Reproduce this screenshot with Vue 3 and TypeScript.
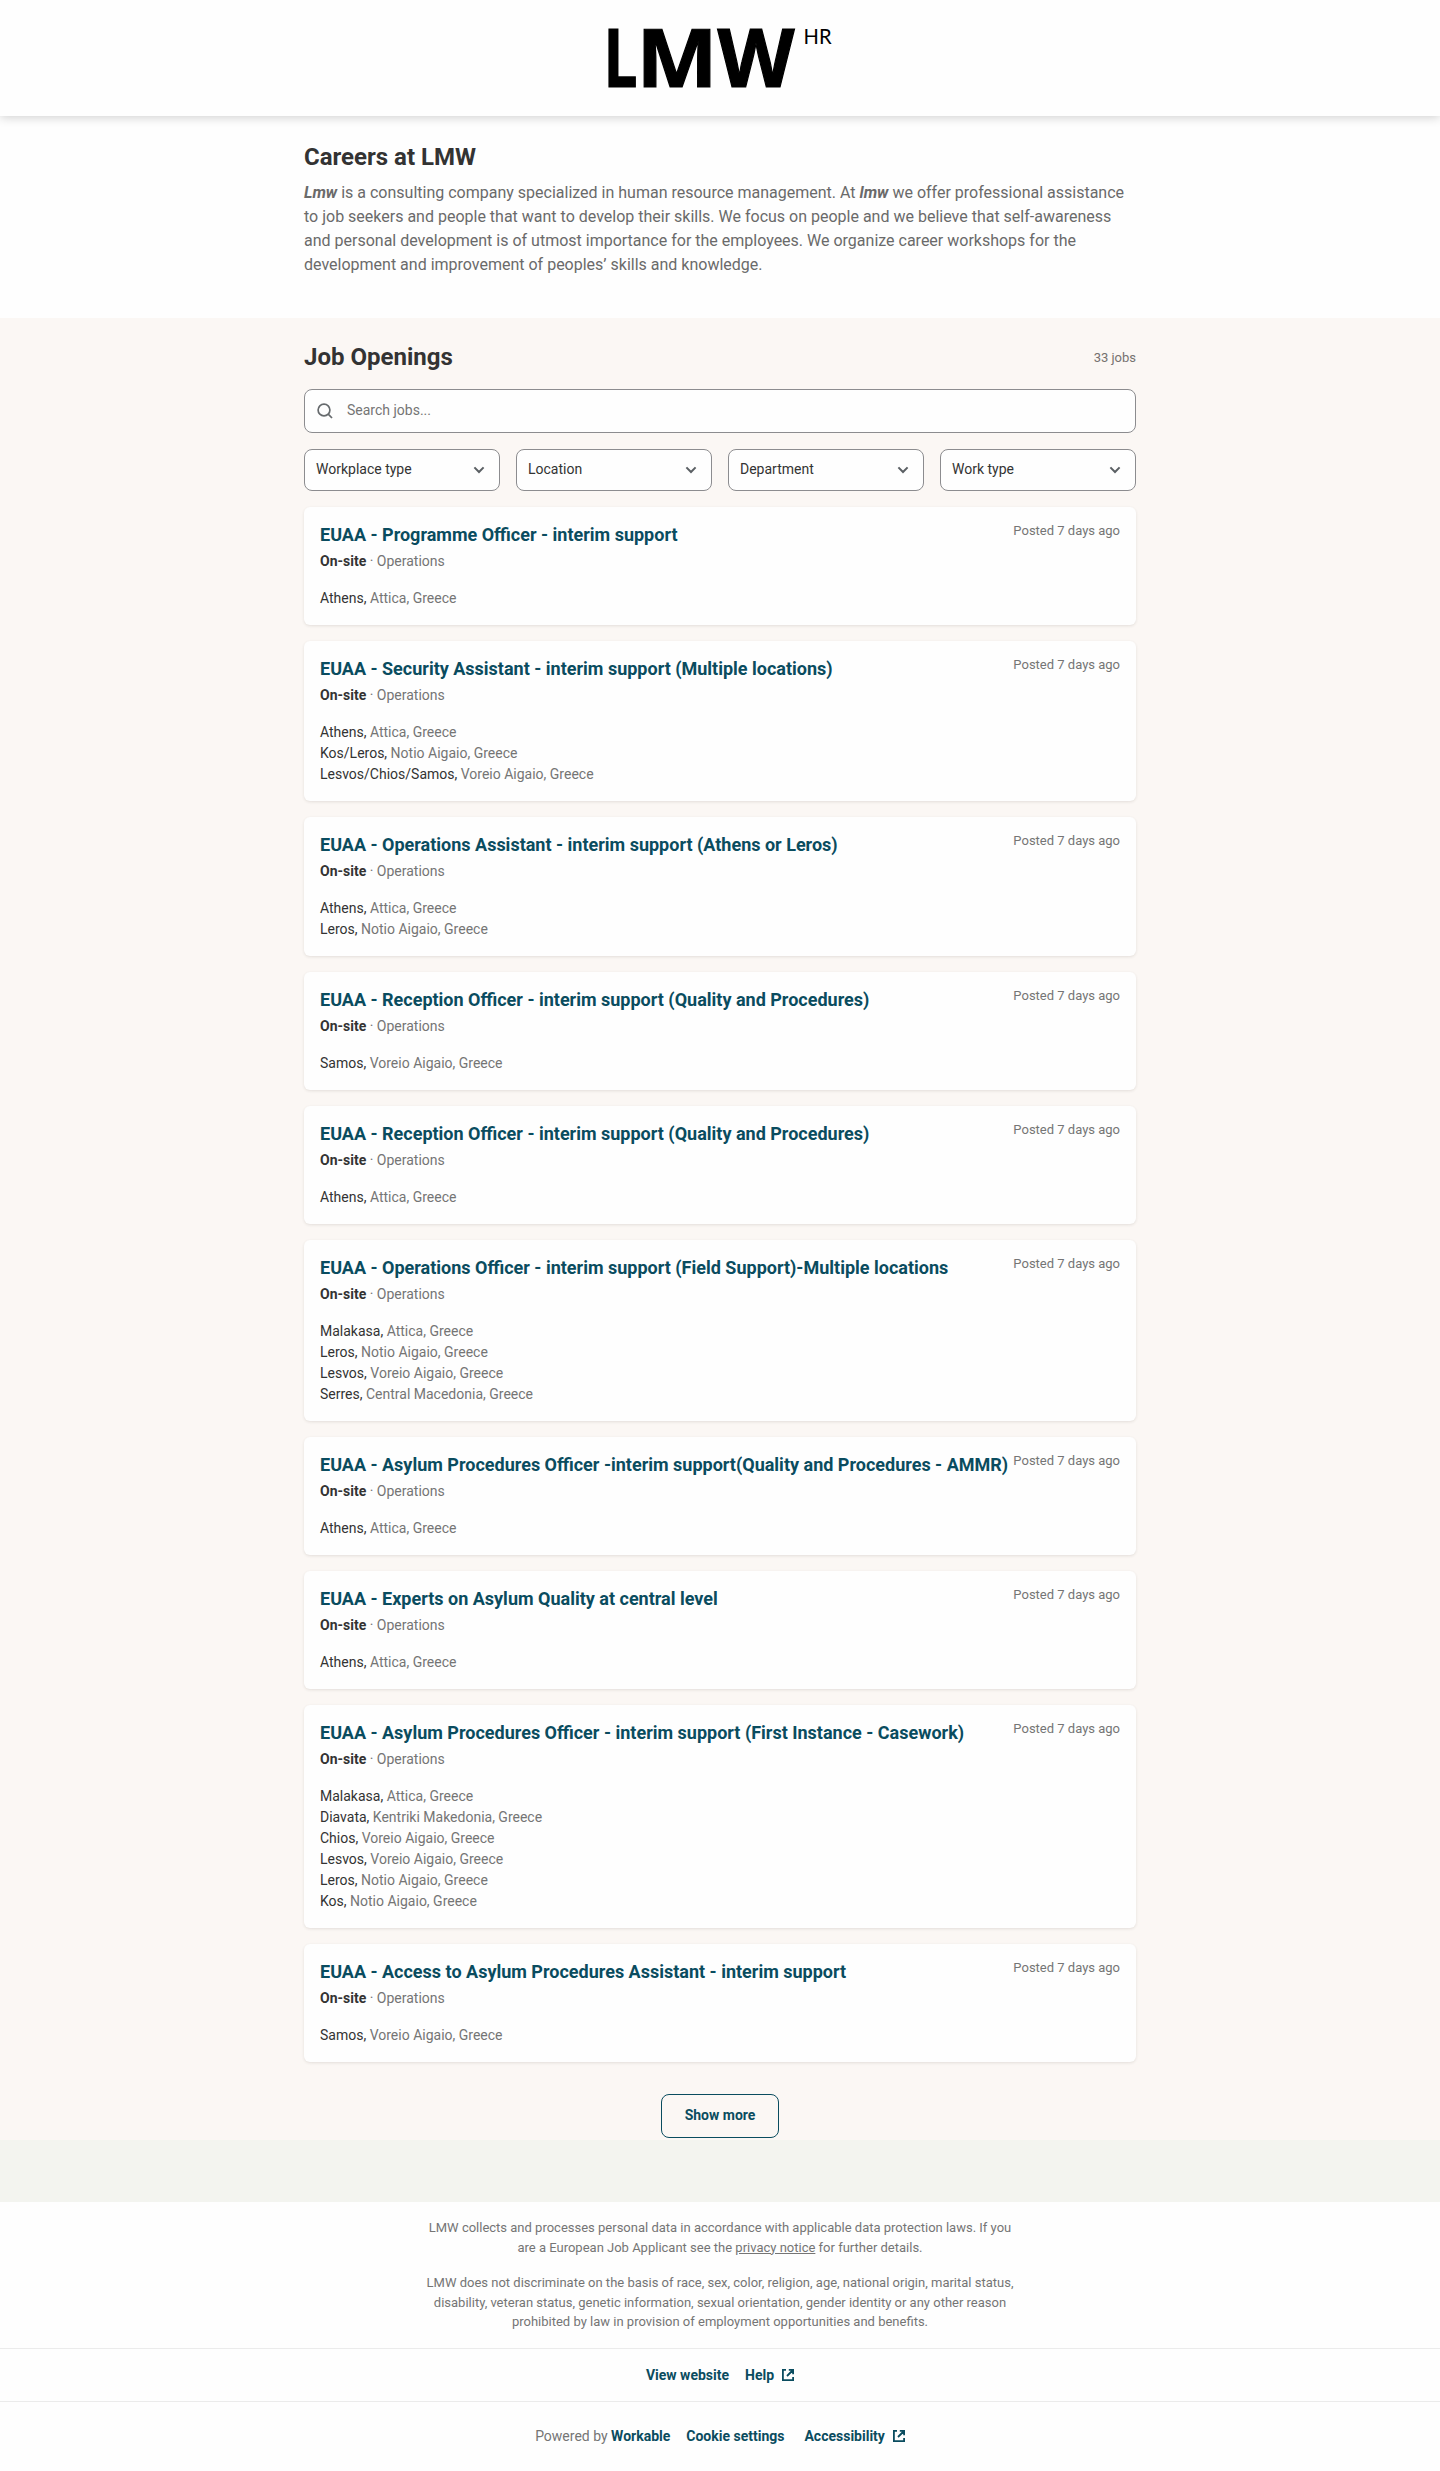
<script setup lang="ts">
interface Place {
  city: string
  region: string
}
interface Job {
  title: string
  places: Place[]
}

const athens: Place = { city: 'Athens', region: 'Attica' }
const malakasa: Place = { city: 'Malakasa', region: 'Attica' }
const samos: Place = { city: 'Samos', region: 'Voreio Aigaio' }
const leros: Place = { city: 'Leros', region: 'Notio Aigaio' }
const lesvos: Place = { city: 'Lesvos', region: 'Voreio Aigaio' }

const filters: string[] = ['Workplace type', 'Location', 'Department', 'Work type']

const jobs: Job[] = [
  { title: 'EUAA - Programme Officer - interim support', places: [athens] },
  {
    title: 'EUAA - Security Assistant - interim support (Multiple locations)',
    places: [
      athens,
      { city: 'Kos/Leros', region: 'Notio Aigaio' },
      { city: 'Lesvos/Chios/Samos', region: 'Voreio Aigaio' },
    ],
  },
  { title: 'EUAA - Operations Assistant - interim support (Athens or Leros)', places: [athens, leros] },
  { title: 'EUAA - Reception Officer - interim support (Quality and Procedures)', places: [samos] },
  { title: 'EUAA - Reception Officer - interim support (Quality and Procedures)', places: [athens] },
  {
    title: 'EUAA - Operations Officer - interim support (Field Support)-Multiple locations',
    places: [malakasa, leros, lesvos, { city: 'Serres', region: 'Central Macedonia' }],
  },
  { title: 'EUAA - Asylum Procedures Officer -interim support(Quality and Procedures - AMMR)', places: [athens] },
  { title: 'EUAA - Experts on Asylum Quality at central level', places: [athens] },
  {
    title: 'EUAA - Asylum Procedures Officer - interim support (First Instance - Casework)',
    places: [
      malakasa,
      { city: 'Diavata', region: 'Kentriki Makedonia' },
      { city: 'Chios', region: 'Voreio Aigaio' },
      lesvos,
      leros,
      { city: 'Kos', region: 'Notio Aigaio' },
    ],
  },
  { title: 'EUAA - Access to Asylum Procedures Assistant - interim support', places: [samos] },
]
</script>

<template>
  <div class="page">
    <header class="header">
      <svg class="logo" width="240" height="80" viewBox="0 0 240 80" role="img" aria-label="LMW HR">
        <g class="logo-main">
          <text x="3.500" y="68.500" textLength="34" lengthAdjust="spacingAndGlyphs">L</text>
          <text x="36.500" y="68.500" textLength="81" lengthAdjust="spacingAndGlyphs">M</text>
          <text x="117.500" y="68.500" textLength="77" lengthAdjust="spacingAndGlyphs">W</text>
        </g>
        <text class="logo-sub" x="203.500" y="25.500" textLength="28" lengthAdjust="spacingAndGlyphs">HR</text>
      </svg>
    </header>

    <section class="about">
      <div class="wrap">
        <h2 class="heading">Careers at LMW</h2>
        <p class="intro">
          <strong><em>Lmw</em></strong> is a consulting company specialized in human resource management. At
          <strong><em>lmw</em></strong> we offer professional assistance to job seekers and people that want to develop
          their skills. We focus on people and we believe that self-awareness and personal development is of utmost
          importance for the employees. We organize career workshops for the development and improvement of peoples’
          skills and knowledge.
        </p>
      </div>
    </section>

    <main class="openings">
      <div class="wrap">
        <div class="openings-head">
          <h2 class="heading">Job Openings</h2>
          <span class="count">33 jobs</span>
        </div>
        <div class="search">
          <svg width="16" height="16" viewBox="0 0 16 16" fill="none" stroke="#666a6d" stroke-width="1.700">
            <circle cx="7" cy="7" r="5.900" />
            <path d="M11.200 11.200 15 15" />
          </svg>
          <span>Search jobs...</span>
        </div>
        <div class="filters">
          <div v-for="f in filters" :key="f" class="filter">
            <span>{{ f }}</span>
            <svg width="12" height="8" viewBox="0 0 12 8" fill="none" stroke="#5a5f63" stroke-width="2">
              <path d="M1.400 1.400 6 6 10.600 1.400" />
            </svg>
          </div>
        </div>
        <ul class="jobs">
          <li v-for="(job, i) in jobs" :key="i" class="job">
            <div class="job-top">
              <h3 class="title">{{ job.title }}</h3>
              <small class="posted">Posted 7 days ago</small>
            </div>
            <div class="meta"><strong>On-site</strong> · Operations</div>
            <div class="places">
              <div v-for="p in job.places" :key="p.city" class="place">
                <span class="city">{{ p.city }},</span> {{ p.region }}, Greece
              </div>
            </div>
          </li>
        </ul>
        <button class="more" type="button">Show more</button>
      </div>
    </main>

    <footer class="footer">
      <div class="legal">
        <p>
          LMW collects and processes personal data in accordance with applicable data protection laws. If you<br />
          are a European Job Applicant see the <a class="notice">privacy notice</a> for further details.
        </p>
        <p>
          LMW does not discriminate on the basis of race, sex, color, religion, age, national origin, marital status,<br />
          disability, veteran status, genetic information, sexual orientation, gender identity or any other reason<br />
          prohibited by law in provision of employment opportunities and benefits.
        </p>
      </div>
      <nav class="links">
        <a>View website</a>
        <a class="external">
          Help
          <svg width="12" height="12" viewBox="0 0 12 12" fill="none" stroke="currentColor" stroke-width="1.800">
            <path d="M4 .9H.9v10.200h10.200V8M6.800.9h4.300v4.300M11 1 5 7" />
          </svg>
        </a>
      </nav>
      <div class="powered">
        <span class="by">Powered by <a>Workable</a></span>
        <a class="cookies">Cookie settings</a>
        <a class="external">
          Accessibility
          <svg width="12" height="12" viewBox="0 0 12 12" fill="none" stroke="currentColor" stroke-width="1.800">
            <path d="M4 .9H.9v10.200h10.200V8M6.800.9h4.300v4.300M11 1 5 7" />
          </svg>
        </a>
      </div>
    </footer>
  </div>
</template>

<style>
body {
  margin: 0;
  background: #f3f4ef;
}
</style>

<style scoped>
.page {
  font-family: Roboto, 'Liberation Sans', sans-serif;
  font-size: 14px;
  color: #333;
}
.page * {
  box-sizing: border-box;
}
.wrap {
  width: 832px;
  margin: 0 auto;
}
.header {
  position: relative;
  display: flex;
  justify-content: center;
  height: 116px;
  padding-top: 18px;
  background: #fefefe;
  box-shadow: 0 1px 10px rgba(0, 0, 0, 0.2);
}
.logo {
  display: block;
  overflow: visible;
}
.logo-main {
  font: 700 80.500px 'Open Sans', sans-serif;
  fill: #000;
  stroke: #000;
  stroke-width: 1.200px;
}
.logo-sub {
  font: 400 20.500px Lato, sans-serif;
  fill: #000;
}
.about {
  height: 202px;
  padding-top: 25px;
  background: #fefefe;
}
.heading {
  margin: 0;
  font-size: 24px;
  line-height: 32px;
  font-weight: 700;
  color: #333;
}
.intro {
  margin: 8px 0 0;
  font-size: 16px;
  line-height: 24px;
  color: #6a6a6a;
}
.openings {
  height: 1822px;
  padding-top: 23px;
  background: #fbf7f4;
}
.openings-head {
  display: flex;
  justify-content: space-between;
  align-items: center;
}
.count {
  font-size: 13px;
  color: #75716f;
}
.search {
  display: flex;
  align-items: center;
  gap: 14px;
  height: 44px;
  margin-top: 16px;
  padding: 0 12px 2px;
  border: 1px solid #8c8c8f;
  border-radius: 8px;
  background: #fefefe;
  color: #757575;
}
.search svg {
  position: relative;
  top: 1px;
}
.filters {
  display: flex;
  gap: 16px;
  margin-top: 16px;
}
.filter {
  display: flex;
  flex: 1;
  align-items: center;
  justify-content: space-between;
  height: 42px;
  padding: 0 14px 2px 11px;
  border: 1px solid #8c8c8f;
  border-radius: 8px;
  background: #fefefe;
}
.filter svg {
  position: relative;
  top: 1px;
}
.jobs {
  display: flex;
  flex-direction: column;
  gap: 16px;
  margin: 16px 0 0;
  padding: 0;
  list-style: none;
}
.job {
  padding: 15px 16px 16px;
  border-radius: 6px;
  background: #fefefe;
  box-shadow: 0 1px 3px rgba(60, 50, 40, 0.12);
}
.job-top {
  display: flex;
  justify-content: space-between;
  height: 29px;
}
.title {
  margin: 0;
  font-size: 18px;
  line-height: 26px;
  font-weight: 700;
  color: #0a4c5f;
  white-space: nowrap;
}
.posted {
  font-size: 13px;
  line-height: 18px;
  color: #757575;
  white-space: nowrap;
}
.meta {
  height: 37px;
  line-height: 21px;
  color: #757575;
}
.meta strong {
  font-weight: 700;
  color: #333;
}
.place {
  line-height: 21px;
  color: #757575;
}
.city {
  color: #333;
}
.more {
  display: block;
  width: 118px;
  height: 44px;
  margin: 32px auto 0;
  padding: 0 0 2px;
  border: 1px solid #0a4c5f;
  border-radius: 8px;
  background: transparent;
  font: 700 14px Roboto, sans-serif;
  color: #0a4c5f;
}
.footer {
  height: 269px;
  margin-top: 62px;
  background: #fefefe;
}
.legal {
  height: 146px;
  padding-top: 16px;
  text-align: center;
  font-size: 13px;
  line-height: 19.500px;
  color: #757575;
}
.legal p {
  margin: 0 0 16px;
}
.notice {
  text-decoration: underline;
}
.links,
.powered {
  display: flex;
  align-items: center;
  justify-content: center;
  gap: 16px;
  border-top: 1px solid #ebebeb;
  font-weight: 700;
  color: #0a4c5f;
}
.links {
  height: 53px;
}
.powered {
  height: 68px;
}
.by {
  font-weight: 400;
  color: #757575;
}
.by a {
  font-weight: 700;
  color: #0a4c5f;
}
.cookies {
  margin-right: 4px;
}
.external {
  display: flex;
  align-items: center;
  gap: 8px;
}
</style>
